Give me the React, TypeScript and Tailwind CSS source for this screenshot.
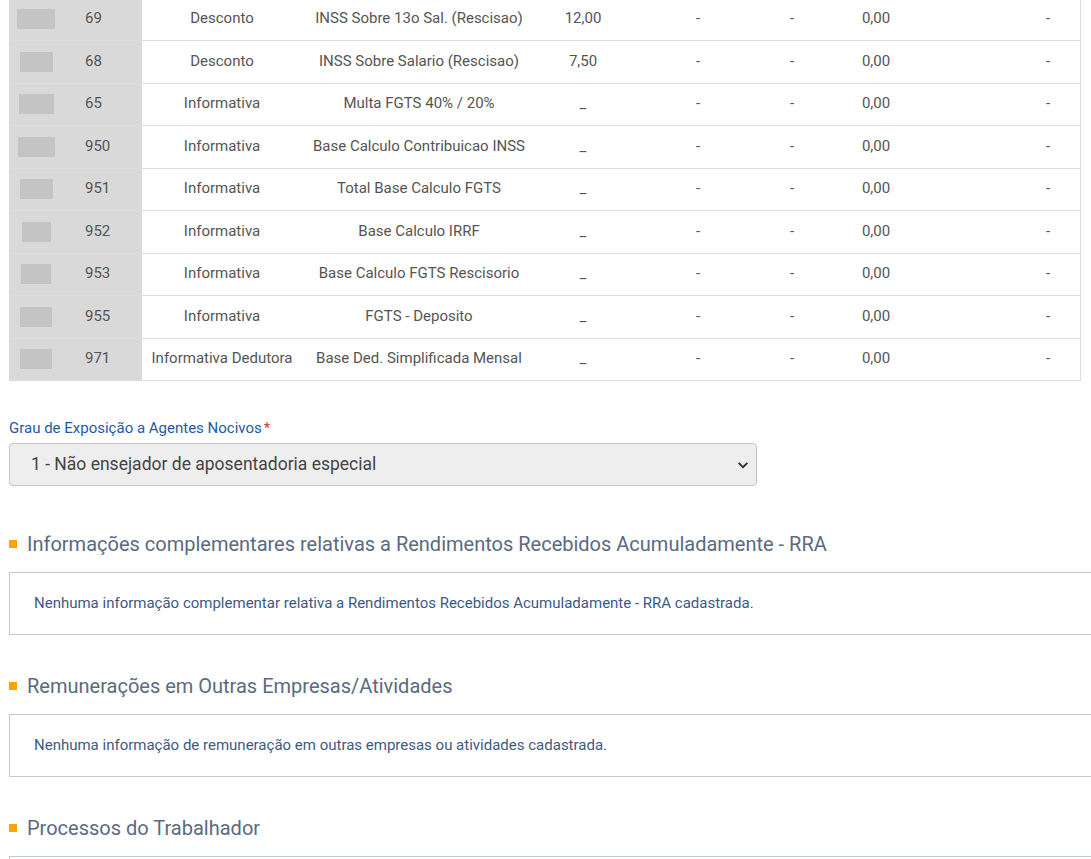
import React from "react";

const rows = [
  { w: 38, id: "69", tipo: "Desconto", desc: "INSS Sobre 13o Sal. (Rescisao)", ref: "12,00" },
  { w: 33, id: "68", tipo: "Desconto", desc: "INSS Sobre Salario (Rescisao)", ref: "7,50" },
  { w: 35, id: "65", tipo: "Informativa", desc: "Multa FGTS 40% / 20%", ref: "_" },
  { w: 37, id: "950", tipo: "Informativa", desc: "Base Calculo Contribuicao INSS", ref: "_" },
  { w: 33, id: "951", tipo: "Informativa", desc: "Total Base Calculo FGTS", ref: "_" },
  { w: 29, id: "952", tipo: "Informativa", desc: "Base Calculo IRRF", ref: "_" },
  { w: 30, id: "953", tipo: "Informativa", desc: "Base Calculo FGTS Rescisorio", ref: "_" },
  { w: 32, id: "955", tipo: "Informativa", desc: "FGTS - Deposito", ref: "_" },
  { w: 32, id: "971", tipo: "Informativa Dedutora", desc: "Base Ded. Simplificada Mensal", ref: "_" },
];

function Section({ title, msg }: { title: string; msg: string }) {
  return (
    <div className="flex flex-col">
      <div className="flex items-center h-[28px]">
        <span className="w-[8px] h-[8px] bg-[#f7a600] mr-[10px]" />
        <span className="text-[20px] text-[#5b6a7f] leading-none">{title}</span>
      </div>
      <div className="mt-[14px] w-[1100px] h-[63px] border border-[#bccbd6] flex items-center pl-[24px]">
        <span className="text-[15px] text-[#3d5a84]">{msg}</span>
      </div>
    </div>
  );
}

export default function App() {
  return (
    <div
      className="w-[1091px] h-[859px] overflow-hidden bg-white"
      style={{ fontFamily: "Roboto, 'Noto Sans', sans-serif" }}
    >
      <div className="pl-[9px] mt-[-1.5px]">
        <div className="w-[1072px] border-r border-[#dcdcdc]">
          {rows.map((r, i) => (
            <div
              key={i}
              className="flex h-[42.5px] border-b border-[#dddddd] text-[15px] text-[#555555] items-stretch"
            >
              <div className="w-[54px] bg-[#d9d9d9] flex items-center justify-center">
                <div className="h-[20px] bg-[#c4c4c4]" style={{ width: r.w }} />
              </div>
              <div className="w-[79px] bg-[#d9d9d9] flex items-center pl-[22px] pb-[2px]">
                {r.id}
              </div>
              <div className="w-[160px] flex items-center justify-center pb-[2px]">{r.tipo}</div>
              <div className="w-[234px] flex items-center justify-center pb-[2px]">{r.desc}</div>
              <div className="w-[94px] flex items-center justify-center pb-[2px]">{r.ref}</div>
              <div className="w-[136px] flex items-center justify-center pb-[2px]">-</div>
              <div className="w-[52px] flex items-center justify-center pb-[2px]">-</div>
              <div className="w-[116px] flex items-center justify-center pb-[2px]">0,00</div>
              <div className="w-[82px]" />
              <div className="flex-1 flex items-center justify-center pb-[2px]">-</div>
            </div>
          ))}
        </div>

        <div className="mt-[40px] text-[15px] text-[#1d5ba6] leading-none">
          Grau de Exposição a Agentes Nocivos<span className="text-[#d9363e] ml-[2px]">*</span>
        </div>
        <div className="mt-[7px] w-[748px] h-[43px] rounded-[4px] border border-[#c6c6c6] bg-[#eeeeee] flex items-center justify-between pl-[21px] pr-[6px]">
          <span className="text-[17.5px] text-[#444444]">1 - Não ensejador de aposentadoria especial</span>
          <svg width="14" height="14" viewBox="0 0 16 16" className="text-[#333]">
            <path d="M3 5.5l5 5 5-5" fill="none" stroke="currentColor" strokeWidth="2.2" />
          </svg>
        </div>

        <div className="mt-[44px] flex flex-col gap-[37px]">
          <Section
            title="Informações complementares relativas a Rendimentos Recebidos Acumuladamente - RRA"
            msg="Nenhuma informação complementar relativa a Rendimentos Recebidos Acumuladamente - RRA cadastrada."
          />
          <Section
            title="Remunerações em Outras Empresas/Atividades"
            msg="Nenhuma informação de remuneração em outras empresas ou atividades cadastrada."
          />
          <Section title="Processos do Trabalhador" msg="" />
        </div>
      </div>
    </div>
  );
}
